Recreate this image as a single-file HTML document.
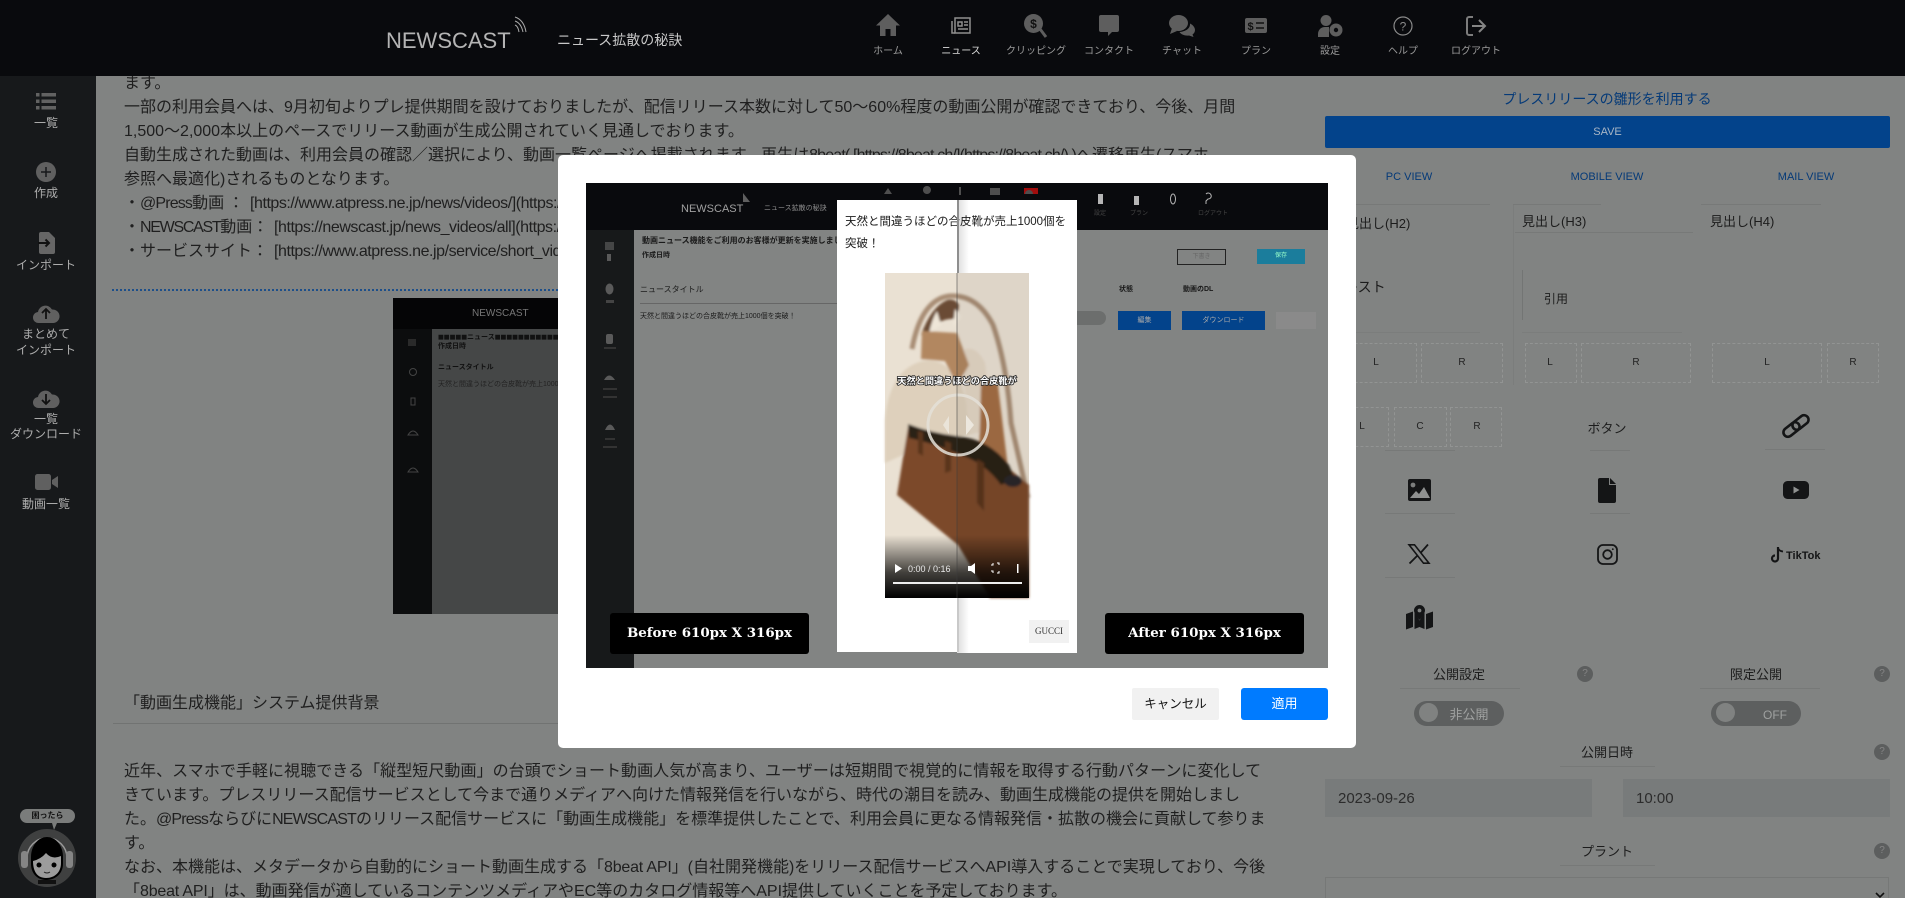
<!DOCTYPE html>
<html lang="ja"><head><meta charset="utf-8"><title>NEWSCAST</title>
<style>
html,body{margin:0;padding:0;width:1905px;height:898px;overflow:hidden;background:#818382}
body{position:relative;font-family:"Liberation Sans","Noto Sans CJK JP",sans-serif;color:#1c1c1c}
.a{position:absolute}
.t{position:absolute;white-space:nowrap}
.c{transform:translateX(-50%)}
svg{position:absolute;overflow:visible}
.l{font-size:16px;line-height:24px;left:124px;color:#1f1f1f}
.n{letter-spacing:-.85px}
.u{letter-spacing:-.45px}
.nl{font-size:10px;line-height:14px;color:#9a9a9a;top:45px}
.sl{font-size:12px;line-height:16px;color:#adadad;left:46px;text-align:center}
.bl{font-size:11px;line-height:16px;color:#053a78}
.box{position:absolute;border:1px dashed #929493;height:40px;top:343px;box-sizing:border-box}
.k{font-size:10px;line-height:14px;color:#222}
.sep{position:absolute;height:1px;background:#777978}
.q{position:absolute;width:16px;height:16px;border-radius:50%;background:#5c5e5e;color:#858585;font-size:10px;line-height:16px;text-align:center}
.m{font-size:7px;color:#1a1a1a;font-weight:bold;line-height:10px}
</style></head><body>

<!-- content text -->
<div class="t l" style="top:72px">ます。</div>
<div class="t l" style="top:96px">一部の利用会員へは、9月初旬よりプレ提供期間を設けておりましたが、配信リリース本数に対して50～60%程度の動画公開が確認できており、今後、月間</div>
<div class="t l" style="top:120px">1,500～2,000本以上のペースでリリース動画が生成公開されていく見通しでおります。</div>
<div class="t l" style="top:144px">自動生成された動画は、利用会員の確認／選択により、動画一覧ページへ掲載されます。再生は<span class="n">8beat( [https://8beat.ch/](https://8beat.ch/) )</span>へ遷移再生(スマホ</div>
<div class="t l" style="top:168px">参照へ最適化)されるものとなります。</div>
<div class="t l" style="top:192px">・<span class="n">@Press</span>動画</div><div class="t l" style="top:192px;left:228px">：</div><div class="t l u" style="top:192px;left:250px">[https://www.atpress.ne.jp/news/videos/](https://www.atpress.ne.jp/news/videos/)</div>
<div class="t l" style="top:216px">・<span class="n" style="letter-spacing:-1.3px">NEWSCAST</span>動画：</div><div class="t l u" style="top:216px;left:274px">[https://newscast.jp/news_videos/all](https://newscast.jp/news_videos/all)</div>
<div class="t l" style="top:240px">・サービスサイト：</div><div class="t l u" style="top:240px;left:274px">[https://www.atpress.ne.jp/service/short_video](https://www.atpress.ne.jp)</div>
<div class="a" style="left:112px;top:289px;width:1150px;border-top:2px dotted #1d4f8a"></div>

<!-- background screenshot -->
<div class="a" style="left:393px;top:298px;width:400px;height:316px;background:#454747"></div>
<div class="a" style="left:393px;top:298px;width:400px;height:31px;background:#050506"></div>
<div class="a" style="left:393px;top:329px;width:39px;height:285px;background:#0c0d0e"></div>
<div class="t" style="left:472px;top:307px;font-size:10px;color:#777;line-height:14px">NEWSCAST</div>
<div class="t" style="left:438px;top:333px;font-size:7px;color:#111;font-weight:bold;line-height:10px">◼◼◼◼◼ニュース◼◼◼◼◼◼◼◼◼◼◼◼◼◼</div>
<div class="t" style="left:438px;top:342px;font-size:7px;color:#111;font-weight:bold;line-height:10px">作成日時</div>
<div class="t" style="left:438px;top:363px;font-size:7px;color:#111;font-weight:bold;line-height:10px">ニュースタイトル</div>
<div class="t" style="left:438px;top:380px;font-size:7px;color:#222;line-height:10px">天然と間違うほどの合皮靴が売上1000個を突破！</div>
<svg style="left:0;top:0" width="560" height="620">
<g fill="none" stroke="#444"><rect x="408" y="339" width="8" height="7" fill="#2a2a2a" stroke="none"/><circle cx="413" cy="372" r="3.500"/><path d="M411 398h4v7h-4zM408 435q5-8 10 0zM408 472q5-8 10 0z"/></g>
</svg>

<div class="t" style="left:124px;top:692px;font-size:16px;line-height:24px;color:#1f1f1f">「動画生成機能」システム提供背景</div>
<div class="sep" style="left:113px;top:723px;width:1150px;background:#717372"></div>
<div class="t l" style="top:760px;letter-spacing:.06px">近年、スマホで手軽に視聴できる「縦型短尺動画」の台頭でショート動画人気が高まり、ユーザーは短期間で視覚的に情報を取得する行動パターンに変化して</div>
<div class="t l" style="top:784px">きています。プレスリリース配信サービスとして今まで通りメディアへ向けた情報発信を行いながら、時代の潮目を読み、動画生成機能の提供を開始しまし</div>
<div class="t l" style="top:808px">た。<span class="n">@Press</span>ならびに<span class="n">NEWSCAST</span>のリリース配信サービスに「動画生成機能」を標準提供したことで、利用会員に更なる情報発信・拡散の機会に貢献して参りま</div>
<div class="t l" style="top:832px">す。</div>
<div class="t l" style="top:856px">なお、本機能は、メタデータから自動的にショート動画生成する「<span style="letter-spacing:-.2px">8beat API</span>」(自社開発機能)をリリース配信サービスへAPI導入することで実現しており、今後</div>
<div class="t l" style="top:880px">「<span style="letter-spacing:-.2px">8beat API</span>」は、動画発信が適しているコンテンツメディアやEC等のカタログ情報等へAPI提供していくことを予定しております。</div>

<!-- right panel -->
<div class="t c" style="left:1607px;top:89px;font-size:14px;line-height:20px;color:#053a78">プレスリリースの雛形を利用する</div>
<div class="a" style="left:1325px;top:116px;width:565px;height:32px;background:#03438b;border-radius:2px;color:#a9b6c6;font-size:11px;line-height:33px;text-align:center">SAVE</div>
<div class="t bl c" style="left:1409px;top:169px">PC VIEW</div>
<div class="t bl c" style="left:1607px;top:169px">MOBILE VIEW</div>
<div class="t bl c" style="left:1806px;top:169px">MAIL VIEW</div>
<div class="sep" style="left:1330px;top:204px;width:160px"></div>
<div class="sep" style="left:1513px;top:204px;width:88px"></div>
<div class="sep" style="left:1701px;top:204px;width:120px"></div>
<div class="t" style="left:1346px;top:214px;font-size:13px;line-height:20px">見出し(H2)</div>
<div class="t" style="left:1522px;top:212px;font-size:13px;line-height:20px">見出し(H3)</div>
<div class="t" style="left:1710px;top:212px;font-size:13px;line-height:20px">見出し(H4)</div>
<div class="sep" style="left:1515px;top:232px;width:178px;background:#777978"></div>
<div class="sep" style="left:1513px;top:205px;width:1px;height:180px;background:#7b7d7c"></div>
<div class="t" style="left:1330px;top:277px;font-size:14px;line-height:20px">テキスト</div>
<div class="sep" style="left:1522px;top:270px;width:1px;height:50px;background:#737574"></div>
<div class="t" style="left:1544px;top:289px;font-size:12px;line-height:20px">引用</div>
<div class="sep" style="left:1330px;top:332px;width:150px;background:#7b7d7c"></div>
<div class="sep" style="left:1522px;top:332px;width:160px;background:#7b7d7c"></div>

<div class="box" style="left:1330px;width:87px"></div><div class="box" style="left:1421px;width:82px"></div>
<div class="box" style="left:1525px;width:52px"></div><div class="box" style="left:1581px;width:110px"></div>
<div class="box" style="left:1712px;width:110px"></div><div class="box" style="left:1827px;width:52px"></div>
<div class="box" style="left:1340px;width:49px;top:407px"></div><div class="box" style="left:1394px;width:53px;top:407px"></div><div class="box" style="left:1450px;width:52px;top:407px"></div>
<div class="t k c" style="left:1376px;top:356px">L</div><div class="t k c" style="left:1462px;top:356px">R</div>
<div class="t k c" style="left:1550px;top:356px">L</div><div class="t k c" style="left:1636px;top:356px">R</div>
<div class="t k c" style="left:1767px;top:356px">L</div><div class="t k c" style="left:1853px;top:356px">R</div>
<div class="t k c" style="left:1362px;top:420px">L</div><div class="t k c" style="left:1420px;top:420px">C</div><div class="t k c" style="left:1477px;top:420px">R</div>
<div class="t c" style="left:1607px;top:419px;font-size:13px;line-height:20px">ボタン</div>

<div class="sep" style="left:1385px;top:450px;width:70px"></div><div class="sep" style="left:1590px;top:450px;width:40px"></div><div class="sep" style="left:1765px;top:449px;width:60px"></div>
<div class="sep" style="left:1385px;top:513px;width:70px"></div><div class="sep" style="left:1590px;top:513px;width:40px"></div>
<div class="sep" style="left:1385px;top:577px;width:70px"></div>

<!-- link -->
<svg style="left:1782px;top:415px" width="28" height="22" viewBox="0 0 28 22" fill="none" stroke="#141516" stroke-width="2.600">
<rect x="-9" y="-4.500" width="18" height="9" rx="4.500" transform="translate(9.500 14.500) rotate(-38)"/>
<rect x="-9" y="-4.500" width="18" height="9" rx="4.500" transform="translate(18.500 7.500) rotate(-38)"/></svg>
<!-- image -->
<svg style="left:1408px;top:479px" width="23" height="22" viewBox="0 0 23 22"><rect width="23" height="22" rx="2" fill="#141516"/><circle cx="5" cy="6" r="2.400" fill="#7c7e7d"/><path d="M2 19l6-7 3 3 5-7 6 11z" fill="#8f9190"/></svg>
<!-- file -->
<svg style="left:1598px;top:478px" width="18" height="25" viewBox="0 0 18 25"><path d="M2 0h9v7h7v16a2 2 0 0 1-2 2H2a2 2 0 0 1-2-2V2a2 2 0 0 1 2-2z" fill="#141516"/><path d="M12 0l6 6h-6z" fill="#141516"/></svg>
<!-- youtube -->
<svg style="left:1783px;top:481px" width="26" height="18" viewBox="0 0 26 18"><rect width="26" height="18" rx="4.500" fill="#141516"/><path d="M10.500 5.500l6 3.500-6 3.500z" fill="#8f9190"/></svg>
<!-- X -->
<svg style="left:1408px;top:544px" width="22" height="20" viewBox="0 0 22 20" fill="none" stroke="#141516"><path d="M1 .8h5.500L21 19.200h-5.500z" stroke-width="1.600"/><path d="M20 .5L12.500 9M9.500 11.500L1.500 19.500" stroke-width="1.800"/></svg>
<!-- instagram -->
<svg style="left:1597px;top:544px" width="21" height="21" viewBox="0 0 21 21" fill="none" stroke="#141516" stroke-width="1.800"><rect x="1" y="1" width="19" height="19" rx="5"/><circle cx="10.500" cy="10.500" r="4.300"/><circle cx="15.800" cy="5.200" r=".9" fill="#141516" stroke="none"/></svg>
<!-- tiktok -->
<svg style="left:1771px;top:547px" width="13" height="16" viewBox="0 0 13 16" fill="none" stroke="#141516" stroke-width="2.200"><path d="M7 0v11.500a3 3 0 1 1-3-3"/><path d="M7 1q1 3 5 3.500" stroke-width="1.800"/></svg>
<div class="t" style="left:1786px;top:549px;font-size:11px;font-weight:bold;line-height:14px;color:#141516">TikTok</div>
<!-- map -->
<svg style="left:1406px;top:605px" width="27" height="25" viewBox="0 0 27 25" fill="#141516"><path d="M0 9l7-2.500V22l-7 2.500zM20 9l7-2.500V22l-7 2.500zM8.500 7.500l5 8 5-8V24l-5-2-5 2z"/><path d="M13.500 0a5.500 5.500 0 0 1 5.500 5.500c0 3-4 8-5.500 9.500C12 13.500 8 8.500 8 5.500A5.500 5.500 0 0 1 13.500 0z"/><circle cx="13.500" cy="5.500" r="1.900" fill="#818382"/></svg>

<div class="t c" style="left:1459px;top:665px;font-size:13px;line-height:20px">公開設定</div>
<div class="t c" style="left:1756px;top:665px;font-size:13px;line-height:20px">限定公開</div>
<div class="q" style="left:1577px;top:666px">?</div><div class="q" style="left:1874px;top:666px">?</div>
<div class="sep" style="left:1400px;top:688px;width:120px"></div><div class="sep" style="left:1700px;top:688px;width:120px"></div>
<div class="a" style="left:1414px;top:701px;width:90px;height:25px;border-radius:13px;background:#5d5f5f"></div>
<div class="a" style="left:1419px;top:703px;width:19px;height:19px;border-radius:50%;background:#808281"></div>
<div class="t c" style="left:1469px;top:705px;font-size:13px;line-height:20px;color:#9fa1a0">非公開</div>
<div class="a" style="left:1711px;top:701px;width:90px;height:25px;border-radius:13px;background:#5d5f5f"></div>
<div class="a" style="left:1716px;top:703px;width:19px;height:19px;border-radius:50%;background:#808281"></div>
<div class="t c" style="left:1775px;top:705px;font-size:12px;line-height:20px;color:#9fa1a0">OFF</div>
<div class="t c" style="left:1607px;top:743px;font-size:13px;line-height:20px">公開日時</div>
<div class="q" style="left:1874px;top:744px">?</div>
<div class="sep" style="left:1560px;top:766px;width:95px"></div>
<div class="a" style="left:1325px;top:779px;width:267px;height:38px;background:#787b7b"></div>
<div class="a" style="left:1623px;top:779px;width:267px;height:38px;background:#787b7b"></div>
<div class="t" style="left:1338px;top:789px;font-size:15px;line-height:20px;color:#2c2c2c">2023-09-26</div>
<div class="t" style="left:1636px;top:789px;font-size:15px;line-height:20px;color:#2c2c2c">10:00</div>
<div class="t c" style="left:1607px;top:842px;font-size:13px;line-height:20px">プラント</div>
<div class="q" style="left:1874px;top:843px">?</div>
<div class="sep" style="left:1560px;top:865px;width:95px"></div>
<div class="a" style="left:1325px;top:877px;width:564px;height:30px;border:1px solid #767877;box-sizing:border-box"></div>
<svg style="left:1875px;top:892px" width="10" height="6" fill="none" stroke="#111" stroke-width="1.600"><path d="M1 1l4 4 4-4"/></svg>

<!-- sidebar -->
<div class="a" style="left:0;top:76px;width:96px;height:822px;background:#17191b"></div>
<svg style="left:36px;top:93px" width="20" height="17" fill="#626262"><rect width="3.500" height="3.500"/><rect x="5.500" width="14.500" height="3.500"/><rect y="6.500" width="3.500" height="3.500"/><rect x="5.500" y="6.500" width="14.500" height="3.500"/><rect y="13" width="3.500" height="3.500"/><rect x="5.500" y="13" width="14.500" height="3.500"/></svg>
<div class="t sl c" style="top:115px">一覧</div>
<svg style="left:36px;top:162px" width="20" height="20"><circle cx="10" cy="10" r="10" fill="#606060"/><path d="M10 5v10M5 10h10" stroke="#17191b" stroke-width="1.500"/></svg>
<div class="t sl c" style="top:185px">作成</div>
<svg style="left:38px;top:232px" width="18" height="22"><path d="M3 0h8l6 6v14a2 2 0 0 1-2 2H3a2 2 0 0 1-2-2V2a2 2 0 0 1 2-2z" fill="#666"/><path d="M0 11h11M7.500 7.500L11 11l-3.500 3.500" stroke="#111" stroke-width="2" fill="none"/></svg>
<div class="t sl c" style="top:257px">インポート</div>
<svg style="left:33px;top:303px" width="26" height="20" viewBox="0 0 26 20"><path d="M6 20a5.500 5.500 0 0 1-1-11A7.500 7.500 0 0 1 19 6.500 6.500 6.500 0 0 1 20.500 20z" fill="#606060"/><path d="M13 16V6M9 10l4-4 4 4" stroke="#111" stroke-width="1.800" fill="none"/></svg>
<div class="t sl c" style="top:326px">まとめて</div>
<div class="t sl c" style="top:342px">インポート</div>
<svg style="left:33px;top:388px" width="26" height="20" viewBox="0 0 26 20"><path d="M6 20a5.500 5.500 0 0 1-1-11A7.500 7.500 0 0 1 19 6.500 6.500 6.500 0 0 1 20.500 20z" fill="#606060"/><path d="M13 6v10M9 12l4 4 4-4" stroke="#111" stroke-width="1.800" fill="none"/></svg>
<div class="t sl c" style="top:411px">一覧</div>
<div class="t sl c" style="top:426px">ダウンロード</div>
<svg style="left:35px;top:474px" width="23" height="16"><rect width="16" height="16" rx="2.500" fill="#606060"/><path d="M17 6l6-4v12l-6-4z" fill="#606060"/></svg>
<div class="t sl c" style="top:496px">動画一覧</div>

<div class="a" style="left:20px;top:809px;width:55px;height:14px;border-radius:7px;background:#7a7c7b;color:#111;font-size:8px;line-height:14px;text-align:center;font-weight:bold">困ったら</div>
<svg style="left:18px;top:823px" width="58" height="65" viewBox="0 0 58 65">
<path d="M34 0l5 0-3 7z" fill="#7a7c7b"/>
<circle cx="29" cy="35" r="29" fill="#3f4040"/>
<path d="M9 35a20 20 0 0 1 40 0" fill="none" stroke="#9a9a9a" stroke-width="1.500"/>
<rect x="3" y="28" width="7" height="17" rx="3" fill="#858585"/><rect x="48" y="28" width="7" height="17" rx="3" fill="#858585"/>
<path d="M28 57c-9 0-15-7-15-16v-7c0-11 7-20 16-20s16 9 16 20v7c0 9-7 16-17 16z" fill="#000"/>
<path d="M15 38q8-2 13-8 6 7 15 3v7c0 9-6 15-15 15s-13-7-13-17z" fill="#9c9c9c"/>
<circle cx="21" cy="42" r="2.500" fill="#000"/><circle cx="36" cy="42" r="2.500" fill="#000"/>
<path d="M26 49q3 2 6 0" fill="none" stroke="#222"/>
<path d="M20 57h18v4H20z" fill="#111"/></svg>

<!-- top bar -->
<div class="a" style="left:0;top:0;width:1905px;height:76px;background:#090a0d"></div>
<div class="t" style="left:386px;top:28px;font-size:22px;line-height:25px;color:#b4b4b4;font-weight:normal;letter-spacing:0">NEWSCAST</div>
<svg style="left:513px;top:16px" width="16" height="17" fill="none" stroke="#a8a8a8" stroke-width="1"><path d="M2 1q9 3 11 15M2 5q6 2 8 11M2 9q3 1 4 7"/></svg>
<div class="t" style="left:557px;top:30px;font-size:14px;line-height:20px;color:#c8c8c8">ニュース拡散の秘訣</div>

<svg style="left:876px;top:14px" width="24" height="22" fill="#5e5e5e"><path d="M12 0L0 11.500h4V22h5.500v-7h5v7H20V11.500h4z"/></svg>
<svg style="left:951px;top:17px" width="20" height="17" fill="none" stroke="#8f8f8f" stroke-width="1.500"><rect x="4" y="1" width="15" height="15"/><path d="M1 4v12h3M7 5h4v4H7zM13 5h4M13 8h4M7 12h10"/></svg>
<svg style="left:1024px;top:14px" width="24" height="23"><circle cx="9.500" cy="9.500" r="9.500" fill="#5e5e5e"/><text x="9.500" y="14" text-anchor="middle" font-size="12" font-weight="bold" fill="#111" font-family="Liberation Sans">$</text><path d="M16 15l6 8" stroke="#5e5e5e" stroke-width="3"/></svg>
<svg style="left:1099px;top:15px" width="20" height="21" fill="#5e5e5e"><path d="M2 0h16a2 2 0 0 1 2 2v13a2 2 0 0 1-2 2h-5l-4 4v-4H2a2 2 0 0 1-2-2V2a2 2 0 0 1 2-2z"/></svg>
<svg style="left:1169px;top:15px" width="26" height="22" fill="#5e5e5e"><ellipse cx="9.500" cy="8" rx="9.500" ry="8"/><path d="M3 13l-2 6 7-3z"/><path d="M21 8.500c3 1.500 5 4 5 6.500 0 2-1 3.500-2.500 4.500l1 2.500-4.500-1.500c-4 .5-8-1-9.500-3.500 6-.5 11-3.500 10.500-8.500z"/></svg>
<svg style="left:1245px;top:18px" width="22" height="15"><rect width="22" height="15" rx="2" fill="#5e5e5e"/><text x="5.500" y="12" text-anchor="middle" font-size="11" font-weight="bold" fill="#111" font-family="Liberation Sans">$</text><path d="M11 5h8M11 10h8" stroke="#111" stroke-width="1.500"/></svg>
<svg style="left:1318px;top:15px" width="25" height="22" fill="#5e5e5e"><circle cx="8" cy="5.500" r="5.500"/><path d="M0 22v-3c0-4 3-7 7-7h4v10z"/><circle cx="18" cy="15" r="6.500"/><circle cx="18" cy="15" r="2.200" fill="#090a0d"/></svg>
<svg style="left:1393px;top:16px" width="20" height="20" fill="none" stroke="#8a8a8a" stroke-width="1.200"><circle cx="10" cy="10" r="9"/><text x="10" y="14.500" text-anchor="middle" font-size="12" fill="#8a8a8a" stroke="none" font-family="Liberation Sans">?</text></svg>
<svg style="left:1466px;top:16px" width="21" height="20" fill="none" stroke="#7c7c7c" stroke-width="2"><path d="M7 1H3a2 2 0 0 0-2 2v14a2 2 0 0 0 2 2h4"/><path d="M6 10h13M13 4l6 6-6 6" stroke="#858585"/></svg>

<div class="t nl c" style="left:888px">ホーム</div>
<div class="t nl c" style="left:961px;color:#dcdcdc">ニュース</div>
<div class="t nl c" style="left:1036px">クリッピング</div>
<div class="t nl c" style="left:1109px">コンタクト</div>
<div class="t nl c" style="left:1182px">チャット</div>
<div class="t nl c" style="left:1256px">プラン</div>
<div class="t nl c" style="left:1330px">設定</div>
<div class="t nl c" style="left:1403px">ヘルプ</div>
<div class="t nl c" style="left:1476px">ログアウト</div>

<!-- modal -->
<div class="a" style="left:558px;top:155px;width:798px;height:593px;background:#fff;border-radius:5px"></div>
<div class="a" style="left:586px;top:183px;width:742px;height:485px;background:#828483;overflow:hidden"></div>
<div class="a" style="left:586px;top:183px;width:742px;height:47px;background:#090a0d"></div>
<div class="a" style="left:586px;top:230px;width:48px;height:438px;background:#17191a"></div>
<div class="t" style="left:681px;top:202px;font-size:11px;line-height:14px;color:#a0a0a0">NEWSCAST</div>
<svg style="left:742px;top:193px" width="8" height="10"><path d="M1 0l7 9H1z" fill="#5f5f5f"/></svg>
<div class="t" style="left:764px;top:204px;font-size:7px;line-height:10px;color:#8c8c8c">ニュース拡散の秘訣</div>
<div class="t m" style="left:642px;top:236px;font-size:8px">動画ニュース機能をご利用のお客様が更新を実施しました</div>
<div class="t m" style="left:642px;top:251px">作成日時</div>
<div class="t m" style="left:640px;top:285px;font-size:8px;font-weight:normal">ニュースタイトル</div>
<div class="a" style="left:640px;top:303px;width:197px;height:1px;background:#666"></div>
<div class="t m" style="left:640px;top:312px;font-weight:normal">天然と間違うほどの合皮靴が売上1000個を突破！</div>
<svg style="left:586px;top:230px" width="48" height="290" fill="#5a5a5a">
<rect x="19" y="12" width="9" height="8" opacity=".7"/><rect x="21" y="24" width="4" height="7"/>
<ellipse cx="23.500" cy="59" rx="4" ry="5.500"/><rect x="20" y="70" width="8" height="3" fill="#444"/>
<rect x="20" y="104" width="7" height="10" rx="2"/><rect x="18" y="117" width="12" height="2" fill="#333"/>
<path d="M18 150q5-9 11 0z"/><rect x="17" y="158" width="14" height="2" fill="#333"/><rect x="17" y="166" width="14" height="2" fill="#333"/>
<path d="M19 200q5-11 10 0z"/><rect x="19" y="208" width="10" height="2" fill="#333"/><rect x="17" y="216" width="14" height="2" fill="#333"/>
</svg>
<div class="a" style="left:1177px;top:249px;width:47px;height:14px;border:1px solid #222;color:#666;font-size:6px;line-height:14px;text-align:center">下書き</div>
<div class="a" style="left:1257px;top:249px;width:48px;height:15px;background:#1b7d9c;color:#9fc;font-size:6px;line-height:15px;text-align:center">保存</div>
<div class="t m" style="left:1119px;top:285px">状態</div>
<div class="t m" style="left:1183px;top:285px">動画のDL</div>
<div class="a" style="left:1077px;top:311px;width:29px;height:14px;border-radius:0 7px 7px 0;background:#6c6e6d"></div>
<div class="a" style="left:1118px;top:311px;width:53px;height:19px;background:#03438b;color:#aaa;font-size:7px;line-height:19px;text-align:center">編集</div>
<div class="a" style="left:1182px;top:311px;width:83px;height:19px;background:#03438b;color:#aaa;font-size:7px;line-height:19px;text-align:center">ダウンロード</div>
<div class="a" style="left:1276px;top:312px;width:40px;height:17px;background:#8a8a8a"></div>
<div class="a" style="left:1024px;top:188px;width:14px;height:6px;background:#a10d0d"></div>
<svg style="left:880px;top:186px" width="340" height="34" fill="#4e4e4e">
<path d="M8 2l4 6H4zM47 0a4 4 0 1 1-.1 0zM79 1h2v8h-2zM110 2h10v7h-10zM145 8a4 4 0 0 1 8 0z"/>
<g fill="#b5b5b5"><rect x="218" y="8" width="5" height="10"/><rect x="254" y="10" width="5" height="9"/></g>
<g fill="none" stroke="#b5b5b5"><ellipse cx="293" cy="13" rx="2.500" ry="5"/><path d="M326 8a3 3 0 1 1 2 5l-2 2v3"/></g>
</svg>
<div class="t" style="left:1094px;top:209px;font-size:6px;line-height:10px;color:#444">設定</div>
<div class="t" style="left:1130px;top:209px;font-size:6px;line-height:10px;color:#444">プラン</div>
<div class="t" style="left:1198px;top:209px;font-size:6px;line-height:10px;color:#444">ログアウト</div>

<!-- preview panel -->
<div class="a" style="left:837px;top:200px;width:240px;height:452px;background:#fff"></div>
<div class="a" style="left:957px;top:200px;width:120px;height:453px;background:linear-gradient(90deg,#dcdcdc 0,#fff 12px)"></div>
<div class="t" style="left:845px;top:211px;font-size:11.500px;line-height:22px;color:#1a1a1a">天然と間違うほどの合皮靴が売上1000個を<br>突破！</div>

<svg style="left:885px;top:273px" width="144" height="325" viewBox="0 0 144 325">
<defs><linearGradient id="g" x1="0" y1="0" x2="0" y2="1"><stop offset="0" stop-color="#000" stop-opacity="0"/><stop offset=".6" stop-color="#000" stop-opacity=".72"/><stop offset="1" stop-color="#000"/></linearGradient>
<filter id="b"><feGaussianBlur stdDeviation="1.300"/></filter></defs>
<rect width="144" height="325" fill="#eae1d3"/>
<g filter="url(#b)">
<!-- cream fabric left -->
<path d="M0 148Q4 96 38 88Q60 84 76 110L90 160L40 172L0 190z" fill="#ded0bc"/>
<!-- right cream behind -->
<path d="M76 78Q90 70 100 90L108 160L84 160z" fill="#e3d6c4"/>
<!-- handle arch -->
<path d="M27 76Q36 27 64 23Q92 21 108 52Q122 92 126 150L143 225" fill="none" stroke="#a88d75" stroke-width="5"/>
<path d="M36 62Q46 34 62 27Q70 25 74 32L72 46Q54 44 44 60z" fill="#6a4b36"/>
<path d="M44 60q3-14 8-22l4 14zM68 54l2-18 7 8z" fill="#efe6d8"/>
<!-- brown strap -->
<path d="M37 58L72 60L84 92L72 112L60 88L36 86z" fill="#b28761"/>
<!-- vertical strap -->
<path d="M96 110L112 104L126 220L94 190z" fill="#a46e45"/>
<!-- bag body -->
<path d="M23 154L72 166L122 194L144 212V325H105L73 272L12 222z" fill="#7c4a29"/>
<!-- dark top edge -->
<path d="M23 151Q46 160 72 163Q104 166 124 192L130 206L116 212Q100 190 76 182Q48 170 24 165z" fill="#2c2017"/>
<path d="M33 158v22l5 3v-24zM60 168v32l6-2v-28zM92 186v44l7 8v-48z" fill="#5a351c"/>
<ellipse cx="128" cy="208" rx="9" ry="6" fill="#2c282a"/>
</g>
<path d="M72 0h72v325H72z" fill="#000" opacity=".05"/>
<rect y="262" width="144" height="63" fill="url(#g)"/>
<text x="72" y="111" text-anchor="middle" font-size="9.200" font-weight="bold" fill="none" stroke="#222" stroke-width="1.600" font-family="Noto Sans CJK JP,sans-serif">天然と間違うほどの合皮靴が</text>
<text x="72" y="111" text-anchor="middle" font-size="9.200" font-weight="bold" fill="#fff" font-family="Noto Sans CJK JP,sans-serif">天然と間違うほどの合皮靴が</text>
<circle cx="73" cy="152" r="30" fill="none" stroke="#e4e0d8" stroke-width="3" opacity=".85"/>
<path d="M81 142v20l8-10z" fill="#ece7de"/><path d="M64 143v18l-6-9z" fill="#ece7de" opacity=".85"/>
<path d="M10 291v9l7-4.500z" fill="#fff"/>
<text x="23" y="299" font-size="9" fill="#e8e8e8" font-family="Liberation Sans">0:00 / 0:16</text>
<path d="M83 293h3l4-3v11l-4-3h-3z" fill="#fff"/>
<path d="M106 292h2v-2M112 290h2v2M106 298h2v2M112 300h2v-2" fill="none" stroke="#fff"/>
<rect x="132" y="291" width="1.500" height="9" fill="#fff"/>
<rect x="8" y="309" width="129" height="2" fill="#eee"/>
<rect x="71.500" width="1" height="325" fill="#3c3c3c" opacity=".55"/>
</svg>
<div class="a" style="left:957px;top:200px;width:2px;height:73px;background:#8e8e8e"></div>
<div class="a" style="left:957px;top:598px;width:2px;height:54px;background:#c9c9c9"></div>
<div class="a" style="left:1029px;top:620px;width:40px;height:23px;background:#f1f1f1;color:#333;font-size:9px;line-height:23px;text-align:center;font-family:'Liberation Serif',serif">GUCCI</div>

<div class="a" style="left:610px;top:613px;width:199px;height:41px;background:#000;border-radius:3px;color:#fff;font:bold 13.400px/41px 'DejaVu Serif',serif;text-align:center">Before 610px X 316px</div>
<div class="a" style="left:1105px;top:613px;width:199px;height:41px;background:#000;border-radius:3px;color:#fff;font:bold 13.400px/41px 'DejaVu Serif',serif;text-align:center">After 610px X 316px</div>
<div class="a" style="left:1132px;top:688px;width:87px;height:32px;background:#f1f1f1;border-radius:2px;color:#111;font-size:12.500px;line-height:32px;text-align:center">キャンセル</div>
<div class="a" style="left:1241px;top:688px;width:87px;height:32px;background:#007bff;border-radius:3px;color:#fff;font-size:13px;line-height:32px;text-align:center">適用</div>

</body></html>
